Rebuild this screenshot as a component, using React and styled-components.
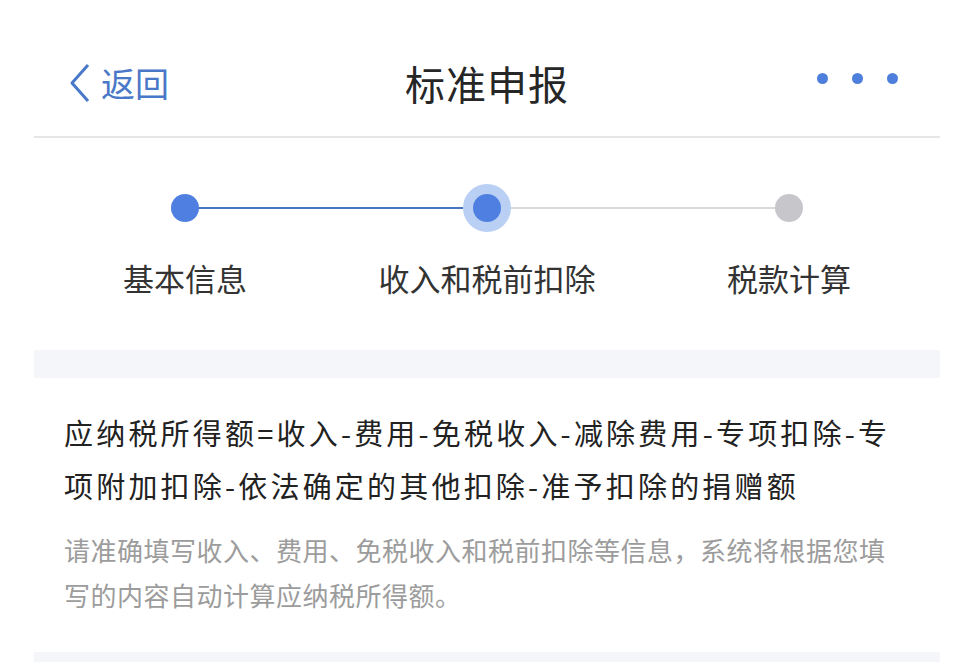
import React from 'react';
import styled, { createGlobalStyle } from 'styled-components';

const Global = createGlobalStyle`
  body {
    margin: 0;
    background: #fff;
    font-family: "Noto Sans CJK SC", "Noto Sans", sans-serif;
  }
`;

const Page = styled.div`
  width: 906px;
  margin-left: 34px;
`;

const Header = styled.div`
  display: grid;
  grid-template-columns: 1fr auto 1fr;
  align-items: center;
  align-content: start;
  height: 138px;
  padding-top: 58px;
  box-sizing: border-box;
  border-bottom: 2px solid #e6e6e8;
`;

const Back = styled.div`
  display: flex;
  align-items: center;
  gap: 10px;
  padding-left: 35px;
  color: #4a78c8;
  font-size: 34px;
  line-height: 50px;
`;

const Title = styled.div`
  font-size: 40px;
  line-height: 50px;
  color: #262626;
  letter-spacing: 1px;
`;

const More = styled.div`
  display: flex;
  justify-content: flex-end;
  gap: 24px;
  padding-right: 42px;
  margin-top: -10px;
`;

const Dot = styled.span`
  width: 11px;
  height: 11px;
  border-radius: 50%;
  background: #4f7fdc;
`;

const Stepper = styled.div`
  display: grid;
  grid-template-columns: repeat(3, 1fr);
  padding: 46px 0 52px;
`;

const Step = styled.div`
  display: flex;
  flex-direction: column;
  align-items: center;
  gap: 26px;
`;

const Track = styled.div`
  position: relative;
  width: 100%;
  height: 48px;
  display: flex;
  align-items: center;
  justify-content: center;
`;

const Line = styled.span`
  position: absolute;
  top: 23px;
  height: 2px;
  width: 50%;
  ${(p) => (p.$side === 'left' ? 'left: 0;' : 'right: 0;')}
  background: ${(p) => (p.$done ? '#4a74c0' : '#d9d9dc')};
`;

const Node = styled.span`
  position: relative;
  z-index: 1;
  box-sizing: content-box;
  width: 28px;
  height: 28px;
  border-radius: 50%;
  background: ${(p) => (p.$state === 'todo' ? '#c6c6cb' : '#4f80e1')};
  border: ${(p) => (p.$state === 'active' ? '10px solid #b9d0f4' : 'none')};
`;

const Label = styled.div`
  font-size: 31px;
  line-height: 40px;
  color: #333;
`;

const Band = styled.div`
  height: ${(p) => p.$h}px;
  background: #f5f6fa;
`;

const Intro = styled.div`
  padding: 28px 30px 35px;
`;

const Formula = styled.div`
  font-size: 29px;
  line-height: 53px;
  color: #222;
  letter-spacing: 3.2px;
`;

const Hint = styled.div`
  margin-top: 15px;
  font-size: 26px;
  line-height: 45px;
  color: #9c9c9c;
  letter-spacing: 0.5px;
`;

const steps = [
  { label: '基本信息', state: 'done' },
  { label: '收入和税前扣除', state: 'active' },
  { label: '税款计算', state: 'todo' },
];

export default function App() {
  return (
    <Page>
      <Global />
      <Header>
        <Back>
          <svg width="22" height="40" viewBox="0 0 22 40">
            <path d="M19 2 L3 20 L19 38" fill="none" stroke="#4a78c8" strokeWidth="3" strokeLinejoin="round" />
          </svg>
          返回
        </Back>
        <Title>标准申报</Title>
        <More>
          <Dot />
          <Dot />
          <Dot />
        </More>
      </Header>
      <Stepper>
        {steps.map((s, i) => (
          <Step key={s.label}>
            <Track>
              {i > 0 && <Line $side="left" $done={s.state !== 'todo'} />}
              {i < steps.length - 1 && <Line $side="right" $done={s.state === 'done'} />}
              <Node $state={s.state} />
            </Track>
            <Label>{s.label}</Label>
          </Step>
        ))}
      </Stepper>
      <Band $h={28} />
      <Intro>
        <Formula>
          应纳税所得额=收入-费用-免税收入-减除费用-专项扣除-专项附加扣除-依法确定的其他扣除-准予扣除的捐赠额
        </Formula>
        <Hint>
          请准确填写收入、费用、免税收入和税前扣除等信息，系统将根据您填写的内容自动计算应纳税所得额。
        </Hint>
      </Intro>
      <Band $h={10} />
    </Page>
  );
}
